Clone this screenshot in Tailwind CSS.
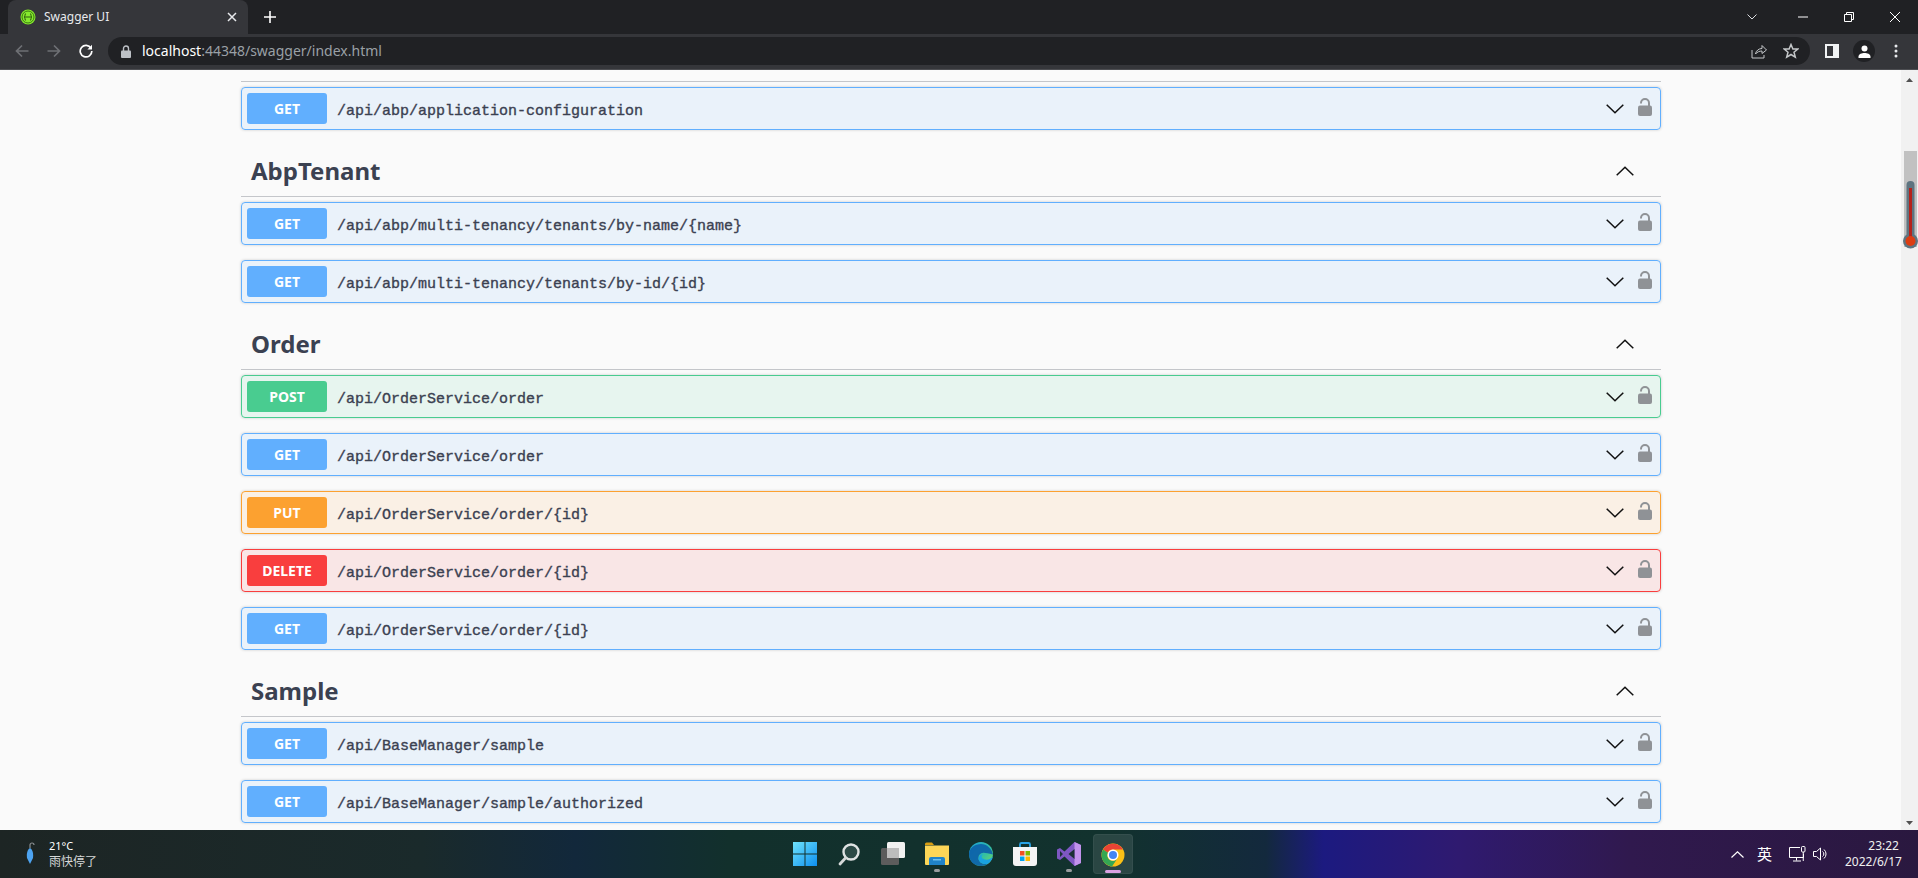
<!DOCTYPE html>
<html lang="zh-CN">
<head>
    <meta charset="UTF-8">
    <title>Swagger UI</title>
    <script src="https://cdn.jsdelivr.net/npm/@tailwindcss/browser@4"></script>
</head>
<body class="h-screen overflow-hidden flex flex-col bg-[#fafafa] font-['Noto_Sans','Noto_Sans_CJK_SC',sans-serif]">
    <svg class="hidden">
        <symbol id="down" viewBox="0 0 18 10"><path d="M0.7 0.7 9 8.8 17.3 0.7" fill="none" stroke="#111" stroke-width="1.5"/></symbol>
        <symbol id="up" viewBox="0 0 18 10"><path d="M0.7 9.3 9 1.2 17.3 9.3" fill="none" stroke="#111" stroke-width="1.5"/></symbol>
        <symbol id="lock" viewBox="0 0 14 18"><path d="M3 5.500V5a4 4 0 0 1 8 0v4" fill="none" stroke="#8f9296" stroke-width="2"/><rect x="0" y="7.500" width="14" height="10.500" rx="2" fill="#8f9296"/></symbol>
    </svg>

    <!-- Barra de abas -->
    <div class="h-[34px] shrink-0 bg-[#202124] flex items-end text-white">
        <div class="ml-2 w-[240px] h-[34px] bg-[#35363a] rounded-t-lg flex items-center pl-3 pr-[11px]">
            <svg class="w-4 h-4 shrink-0" viewBox="0 0 16 16"><circle cx="8" cy="8" r="7.500" fill="#85ea2d"/><circle cx="8" cy="8" r="6" fill="none" stroke="#3b7a12" stroke-width="1"/><path d="M6 4.500C4.500 4.500 5.500 8 4 8c1.500 0 .5 3.500 2 3.500M10 4.500c1.500 0 .5 3.500 2 3.500-1.500 0-.5 3.500-2 3.500M4.500 8h7" fill="none" stroke="#2c5a0d" stroke-width="1"/></svg>
            <span class="ml-2 text-xs text-[#e8eaed]">Swagger UI</span>
            <svg class="ml-auto w-[10px] h-[10px]" viewBox="0 0 10 10"><path d="M1 1l8 8M9 1l-8 8" stroke="#e8eaed" stroke-width="1.500"/></svg>
        </div>
        <svg class="ml-4 mb-[11px] w-3 h-3" viewBox="0 0 12 12"><path d="M6 0v12M0 6h12" stroke="#fff" stroke-width="1.600"/></svg>
        <div class="ml-auto flex items-center h-full">
            <svg class="w-[10px] h-[6px] mr-[41px]" viewBox="0 0 10 6"><path d="M0.500 0.500 5 5 9.500 0.500" fill="none" stroke="#dadce0" stroke-width="1"/></svg>
            <svg class="w-[10px] h-[10px] mr-9" viewBox="0 0 10 10"><path d="M0 5h10" stroke="#fff"/></svg>
            <svg class="w-[10px] h-[10px] mr-9" viewBox="0 0 10 10"><path d="M0.500 2.500h7v7h-7zM2.500 2.500v-2h7v7h-2" fill="none" stroke="#fff"/></svg>
            <svg class="w-[10px] h-[10px] mr-[18px]" viewBox="0 0 10 10"><path d="M0 0l10 10M10 0L0 10" stroke="#fff"/></svg>
        </div>
    </div>

    <!-- Barra de endereço -->
    <div class="h-9 shrink-0 bg-[#35363a] border-b border-[#4d4e52] flex items-center pb-px">
        <svg class="ml-[15px] w-[14px] h-[14px]" viewBox="0 0 14 14"><path d="M13.500 7H1.500M7 1.500 1.500 7 7 12.500" fill="none" stroke="#6e7074" stroke-width="1.700"/></svg>
        <svg class="ml-[18px] w-[14px] h-[14px]" viewBox="0 0 14 14"><path d="M0.500 7H12.500M7 1.500 12.500 7 7 12.500" fill="none" stroke="#6e7074" stroke-width="1.700"/></svg>
        <svg class="ml-[18px] w-[14px] h-[14px]" viewBox="0 0 14 14"><path d="M12 4.200A5.800 5.800 0 1 0 12.800 7" fill="none" stroke="#fff" stroke-width="1.700"/><path d="M13 0.800v4.600H8.400z" fill="#fff"/></svg>
        <div class="ml-[15px] w-[1702px] h-7 rounded-full bg-[#202124] flex items-center pl-[13px]">
            <svg class="w-[10px] h-[13px]" viewBox="0 0 10 13"><path d="M2.500 6V3.500a2.500 2.500 0 0 1 5 0V6" fill="none" stroke="#bdc1c6" stroke-width="1.400"/><rect y="5.500" width="10" height="7.500" rx="1" fill="#bdc1c6"/></svg>
            <span class="ml-[11px] text-sm text-white">localhost<span class="text-[#9aa0a6]">:44348/swagger/index.html</span></span>
            <svg class="ml-auto w-[16px] h-[16px]" viewBox="0 0 16 16"><path d="M1 7v8h12v-3M4.500 11C5 7.500 8 5.500 11 5.500V2.500l4.500 4.500L11 10.500V8C8.500 8 6 9 4.500 11z" fill="none" stroke="#c4c7c9" stroke-width="1"/></svg>
            <svg class="ml-4 mr-[11px] w-[16px] h-[16px]" viewBox="0 0 16 16"><path d="M8 1.500 9.900 6h4.900l-3.800 3.200 1.300 4.900L8 11.500l-4.300 2.600L5 9.200 1.200 6h4.900z" fill="none" stroke="#c4c7c9" stroke-width="1.500"/></svg>
        </div>
        <svg class="ml-[15px] w-[14px] h-[14px]" viewBox="0 0 14 14"><path d="M0 0h14v14H0z" fill="#f1f3f4"/><path d="M2 2h6v10H2z" fill="#35363a"/></svg>
        <div class="ml-[14px] w-[22px] h-[22px] rounded-full bg-[#202124] flex items-center justify-center">
            <svg class="w-[13px] h-[13px]" viewBox="0 0 13 13"><circle cx="6.500" cy="3.500" r="3" fill="#fff"/><path d="M0.500 13v-1.500C0.500 9 4 8 6.500 8s6 1 6 3.500V13z" fill="#fff"/></svg>
        </div>
        <svg class="ml-[19px] w-[4px] h-[14px]" viewBox="0 0 4 14"><circle cx="2" cy="2" r="1.500" fill="#e8eaed"/><circle cx="2" cy="7" r="1.500" fill="#e8eaed"/><circle cx="2" cy="12" r="1.500" fill="#e8eaed"/></svg>
    </div>

    <!-- Página -->
    <div class="flex-1 min-h-0 flex relative">
        <main class="flex-1 min-w-0 overflow-hidden pl-[241px]">
            <div class="w-[1420px] text-[#3b4151]">
                <div class="h-3 border-b border-[#c4c6ca] mb-[5px]"></div>
                <div class="h-[43px] mb-[15px] flex items-center pl-[5px] pr-[8px] border border-[#61affe] rounded bg-[#61affe]/10 shadow-[0_0_3px_rgba(0,0,0,0.19)]">
                    <span class="w-20 h-[31px] rounded-[3px] bg-[#61affe] text-white text-sm font-bold flex items-center justify-center">GET</span>
                    <span class="ml-[10px] mt-[7px] font-['Liberation_Mono',monospace] text-[15px] [-webkit-text-stroke:0.35px_#3b4151]">/api/abp/application-configuration</span>
                    <svg class="ml-auto w-[18px] h-[10px]"><use href="#down"/></svg><svg class="ml-[14px] w-[14px] h-[18px] mb-1"><use href="#lock"/></svg>
                </div>

                <div class="h-[52px] mb-[5px] pl-[10px] pr-[27px] border-b border-[#c4c6ca] flex items-center justify-between">
                    <h2 class="text-2xl font-bold">AbpTenant</h2>
                    <svg class="w-[18px] h-[10px]"><use href="#up"/></svg>
                </div>
                <div class="h-[43px] mb-[15px] flex items-center pl-[5px] pr-[8px] border border-[#61affe] rounded bg-[#61affe]/10 shadow-[0_0_3px_rgba(0,0,0,0.19)]">
                    <span class="w-20 h-[31px] rounded-[3px] bg-[#61affe] text-white text-sm font-bold flex items-center justify-center">GET</span>
                    <span class="ml-[10px] mt-[7px] font-['Liberation_Mono',monospace] text-[15px] [-webkit-text-stroke:0.35px_#3b4151]">/api/abp/multi-tenancy/tenants/by-name/{name}</span>
                    <svg class="ml-auto w-[18px] h-[10px]"><use href="#down"/></svg><svg class="ml-[14px] w-[14px] h-[18px] mb-1"><use href="#lock"/></svg>
                </div>
                <div class="h-[43px] mb-[15px] flex items-center pl-[5px] pr-[8px] border border-[#61affe] rounded bg-[#61affe]/10 shadow-[0_0_3px_rgba(0,0,0,0.19)]">
                    <span class="w-20 h-[31px] rounded-[3px] bg-[#61affe] text-white text-sm font-bold flex items-center justify-center">GET</span>
                    <span class="ml-[10px] mt-[7px] font-['Liberation_Mono',monospace] text-[15px] [-webkit-text-stroke:0.35px_#3b4151]">/api/abp/multi-tenancy/tenants/by-id/{id}</span>
                    <svg class="ml-auto w-[18px] h-[10px]"><use href="#down"/></svg><svg class="ml-[14px] w-[14px] h-[18px] mb-1"><use href="#lock"/></svg>
                </div>

                <div class="h-[52px] mb-[5px] pl-[10px] pr-[27px] border-b border-[#c4c6ca] flex items-center justify-between">
                    <h2 class="text-2xl font-bold">Order</h2>
                    <svg class="w-[18px] h-[10px]"><use href="#up"/></svg>
                </div>
                <div class="h-[43px] mb-[15px] flex items-center pl-[5px] pr-[8px] border border-[#49cc90] rounded bg-[#49cc90]/10 shadow-[0_0_3px_rgba(0,0,0,0.19)]">
                    <span class="w-20 h-[31px] rounded-[3px] bg-[#49cc90] text-white text-sm font-bold flex items-center justify-center">POST</span>
                    <span class="ml-[10px] mt-[7px] font-['Liberation_Mono',monospace] text-[15px] [-webkit-text-stroke:0.35px_#3b4151]">/api/OrderService/order</span>
                    <svg class="ml-auto w-[18px] h-[10px]"><use href="#down"/></svg><svg class="ml-[14px] w-[14px] h-[18px] mb-1"><use href="#lock"/></svg>
                </div>
                <div class="h-[43px] mb-[15px] flex items-center pl-[5px] pr-[8px] border border-[#61affe] rounded bg-[#61affe]/10 shadow-[0_0_3px_rgba(0,0,0,0.19)]">
                    <span class="w-20 h-[31px] rounded-[3px] bg-[#61affe] text-white text-sm font-bold flex items-center justify-center">GET</span>
                    <span class="ml-[10px] mt-[7px] font-['Liberation_Mono',monospace] text-[15px] [-webkit-text-stroke:0.35px_#3b4151]">/api/OrderService/order</span>
                    <svg class="ml-auto w-[18px] h-[10px]"><use href="#down"/></svg><svg class="ml-[14px] w-[14px] h-[18px] mb-1"><use href="#lock"/></svg>
                </div>
                <div class="h-[43px] mb-[15px] flex items-center pl-[5px] pr-[8px] border border-[#fca130] rounded bg-[#fca130]/10 shadow-[0_0_3px_rgba(0,0,0,0.19)]">
                    <span class="w-20 h-[31px] rounded-[3px] bg-[#fca130] text-white text-sm font-bold flex items-center justify-center">PUT</span>
                    <span class="ml-[10px] mt-[7px] font-['Liberation_Mono',monospace] text-[15px] [-webkit-text-stroke:0.35px_#3b4151]">/api/OrderService/order/{id}</span>
                    <svg class="ml-auto w-[18px] h-[10px]"><use href="#down"/></svg><svg class="ml-[14px] w-[14px] h-[18px] mb-1"><use href="#lock"/></svg>
                </div>
                <div class="h-[43px] mb-[15px] flex items-center pl-[5px] pr-[8px] border border-[#f93e3e] rounded bg-[#f93e3e]/10 shadow-[0_0_3px_rgba(0,0,0,0.19)]">
                    <span class="w-20 h-[31px] rounded-[3px] bg-[#f93e3e] text-white text-sm font-bold flex items-center justify-center">DELETE</span>
                    <span class="ml-[10px] mt-[7px] font-['Liberation_Mono',monospace] text-[15px] [-webkit-text-stroke:0.35px_#3b4151]">/api/OrderService/order/{id}</span>
                    <svg class="ml-auto w-[18px] h-[10px]"><use href="#down"/></svg><svg class="ml-[14px] w-[14px] h-[18px] mb-1"><use href="#lock"/></svg>
                </div>
                <div class="h-[43px] mb-[15px] flex items-center pl-[5px] pr-[8px] border border-[#61affe] rounded bg-[#61affe]/10 shadow-[0_0_3px_rgba(0,0,0,0.19)]">
                    <span class="w-20 h-[31px] rounded-[3px] bg-[#61affe] text-white text-sm font-bold flex items-center justify-center">GET</span>
                    <span class="ml-[10px] mt-[7px] font-['Liberation_Mono',monospace] text-[15px] [-webkit-text-stroke:0.35px_#3b4151]">/api/OrderService/order/{id}</span>
                    <svg class="ml-auto w-[18px] h-[10px]"><use href="#down"/></svg><svg class="ml-[14px] w-[14px] h-[18px] mb-1"><use href="#lock"/></svg>
                </div>

                <div class="h-[52px] mb-[5px] pl-[10px] pr-[27px] border-b border-[#c4c6ca] flex items-center justify-between">
                    <h2 class="text-2xl font-bold">Sample</h2>
                    <svg class="w-[18px] h-[10px]"><use href="#up"/></svg>
                </div>
                <div class="h-[43px] mb-[15px] flex items-center pl-[5px] pr-[8px] border border-[#61affe] rounded bg-[#61affe]/10 shadow-[0_0_3px_rgba(0,0,0,0.19)]">
                    <span class="w-20 h-[31px] rounded-[3px] bg-[#61affe] text-white text-sm font-bold flex items-center justify-center">GET</span>
                    <span class="ml-[10px] mt-[7px] font-['Liberation_Mono',monospace] text-[15px] [-webkit-text-stroke:0.35px_#3b4151]">/api/BaseManager/sample</span>
                    <svg class="ml-auto w-[18px] h-[10px]"><use href="#down"/></svg><svg class="ml-[14px] w-[14px] h-[18px] mb-1"><use href="#lock"/></svg>
                </div>
                <div class="h-[43px] mb-[15px] flex items-center pl-[5px] pr-[8px] border border-[#61affe] rounded bg-[#61affe]/10 shadow-[0_0_3px_rgba(0,0,0,0.19)]">
                    <span class="w-20 h-[31px] rounded-[3px] bg-[#61affe] text-white text-sm font-bold flex items-center justify-center">GET</span>
                    <span class="ml-[10px] mt-[7px] font-['Liberation_Mono',monospace] text-[15px] [-webkit-text-stroke:0.35px_#3b4151]">/api/BaseManager/sample/authorized</span>
                    <svg class="ml-auto w-[18px] h-[10px]"><use href="#down"/></svg><svg class="ml-[14px] w-[14px] h-[18px] mb-1"><use href="#lock"/></svg>
                </div>
            </div>
        </main>

        <!-- Barra de rolagem -->
        <aside class="w-[17px] shrink-0 bg-[#f1f1f1] flex flex-col items-center">
            <svg class="mt-2 w-[7px] h-1 shrink-0" viewBox="0 0 7 4"><path d="M3.500 0 7 4H0z" fill="#505050"/></svg>
            <div class="mt-[69px] ml-px w-[13px] h-[96px] bg-[#c1c1c1]"></div>
            <svg class="mt-auto mb-[5px] w-[7px] h-1 shrink-0" viewBox="0 0 7 4"><path d="M0 0h7L3.500 4z" fill="#505050"/></svg>
        </aside>

        <!-- Termômetro sobre a barra -->
        <svg class="absolute right-0 top-[110px] w-[15px] h-[70px]" viewBox="0 0 15 70">
            <rect x="3.500" y="1" width="8" height="60" rx="4" fill="#5e7480"/>
            <circle cx="7.500" cy="61" r="7.500" fill="#5e7480"/>
            <rect x="6" y="8" width="3" height="50" fill="#b5231c"/>
            <circle cx="7.500" cy="61" r="5" fill="#dc3d12"/>
        </svg>
    </div>

    <!-- Barra de tarefas -->
    <footer class="h-12 shrink-0 grid grid-cols-[1fr_auto_1fr] items-center text-white bg-[linear-gradient(90deg,#1d2524_0%,#1a2a2b_22%,#12283b_30%,#12302c_38%,#12322e_58%,#13293d_66%,#1c1a80_69%,#2f1a70_76%,#30194e_85%,#2a183f_100%)]">
        <div class="flex items-center pl-[25px]">
            <svg class="w-[10px] h-[24px]" viewBox="0 0 10 24"><path d="M5 6C2 8 1.500 12 2 16l3 6 3-6c.5-4 0-8-3-10z" fill="#4da3f0"/><path d="M5 6V3a2 2 0 0 1 4 0" fill="none" stroke="#8a8f92" stroke-width="1.200"/></svg>
            <div class="ml-[14px] text-xs leading-4">
                <div class="text-[11px] text-white">21°C</div>
                <div class="text-[#d5d8d8]">雨快停了</div>
            </div>
        </div>

        <div class="flex items-center h-full">
            <div class="w-11 h-full flex items-center justify-center">
                <svg class="w-6 h-6" viewBox="0 0 24 24"><defs><linearGradient id="win" x1="0" y1="0" x2="1" y2="1"><stop offset="0" stop-color="#6fe3fb"/><stop offset="1" stop-color="#0d8ff0"/></linearGradient></defs><path d="M0 0h11.500v11.500H0zM12.500 0H24v11.500H12.500zM0 12.500h11.500V24H0zM12.500 12.500H24V24H12.500z" fill="url(#win)"/></svg>
            </div>
            <div class="w-11 h-full flex items-center justify-center">
                <svg class="w-[22px] h-[24px]" viewBox="0 0 22 24"><circle cx="13" cy="10" r="7.500" fill="#2c4a46" stroke="#dfe3e3" stroke-width="2.400"/><path d="M7.500 16 2 22" stroke="#d5d8d8" stroke-width="2.800" stroke-linecap="round"/></svg>
            </div>
            <div class="w-11 h-full flex items-center justify-center">
                <svg class="w-6 h-6" viewBox="0 0 24 24"><rect x="6" y="0" width="18" height="16" rx="1.500" fill="#f2f2f2"/><rect x="0" y="6" width="18" height="17" rx="1.500" fill="#5c5c5c"/><rect x="6" y="6" width="12" height="10" fill="#bdbdbd"/></svg>
            </div>
            <div class="w-11 h-full flex flex-col items-center justify-center relative">
                <svg class="w-6 h-6" viewBox="0 0 24 24"><path d="M0 2a1.500 1.500 0 0 1 1.500-1.500H7l2 2.500h-9z" fill="#d99e12"/><path d="M0 3.500h24V22a1 1 0 0 1-1 1H1a1 1 0 0 1-1-1z" fill="#fcd657"/><path d="M4 17a2 2 0 0 1 2-2h12a2 2 0 0 1 2 2v6H4z" fill="#1f83c8"/><rect x="8" y="17" width="8" height="1.500" fill="#6cc0ee"/></svg>
                <span class="absolute bottom-[6px] w-[6px] h-[3px] rounded-full bg-[#9a9ea0]"></span>
            </div>
            <div class="w-11 h-full flex items-center justify-center">
                <svg class="w-6 h-6" viewBox="0 0 24 24"><defs><linearGradient id="edgeA" x1="0" y1="0" x2="1" y2="1"><stop offset="0" stop-color="#1a9fd8"/><stop offset="0.600" stop-color="#35c1a0"/><stop offset="1" stop-color="#7bdc5a"/></linearGradient></defs><circle cx="12" cy="12" r="12" fill="url(#edgeA)"/><path d="M0 12C0 19 5 24 12 24c3 0 5-1 6.500-2-3 .5-7-.5-8.500-3.500-1.500-3 0-7 3.500-7.500 2.500-.5 5 .5 10.500 1.500C23 7 18 2 12 2 6 2 0 6 0 12z" fill="#0c5fa8" opacity="0.900"/><path d="M10 18.500C11.500 21.500 15.500 22.500 18.500 22 21 20.500 23 18 24 14.500 22 17 19 18 16 17.500c-2-.3-3.500-1.500-3.500-3 0-1 .7-1.800 1.800-2.500-3 .2-5.500 3.500-4.300 6.500z" fill="#19a2e0"/></svg>
            </div>
            <div class="w-11 h-full flex items-center justify-center">
                <svg class="w-6 h-6" viewBox="0 0 24 24"><path d="M7 6V2.500a1.500 1.500 0 0 1 1.500-1.500h7A1.500 1.500 0 0 1 17 2.500V6" fill="none" stroke="#2aa3e6" stroke-width="1.800"/><path d="M0 5h24v16a3 3 0 0 1-3 3H3a3 3 0 0 1-3-3z" fill="#f4f4f4"/><rect x="7" y="9" width="4.500" height="4.500" fill="#f25022"/><rect x="12.500" y="9" width="4.500" height="4.500" fill="#7fba00"/><rect x="7" y="14.500" width="4.500" height="4.500" fill="#00a4ef"/><rect x="12.500" y="14.500" width="4.500" height="4.500" fill="#ffb900"/></svg>
            </div>
            <div class="w-11 h-full flex items-center justify-center relative">
                <svg class="w-6 h-6" viewBox="0 0 24 24"><path d="M17.500 0 24 3v18l-6.500 3L7.500 14.500 3 18l-3-1.500v-9L3 6l4.500 3.500z" fill="#7e57c2"/><path d="M17.500 0 24 3v18l-6.500 3z" fill="#c292ec"/><path d="M17.500 7 11.500 12l6 5zM3 9v6l3-3z" fill="#1a2f35"/></svg>
                <span class="absolute bottom-[6px] w-[6px] h-[3px] rounded-full bg-[#9a9ea0]"></span>
            </div>
            <div class="w-11 h-full flex items-center justify-center">
                <div class="w-10 h-10 rounded bg-white/10 border border-white/5 flex flex-col items-center relative">
                    <svg class="mt-[8px] w-6 h-6" viewBox="0 0 24 24"><circle cx="12" cy="12" r="11.500" fill="#fbc116"/><path d="M2 6.500A11.500 11.500 0 0 1 22 6.500H12a5.500 5.500 0 0 0-5 3.200z" fill="#ea4335"/><path d="M2 6.500 7 9.700A5.500 5.500 0 0 0 16.700 15L11 23.500A11.500 11.500 0 0 1 2 6.500z" fill="#34a853"/><circle cx="12" cy="12" r="5.500" fill="#fff"/><circle cx="12" cy="12" r="4" fill="#4285f4"/></svg>
                    <span class="absolute bottom-0 w-4 h-[3px] rounded-full bg-[#dba2e3]"></span>
                </div>
            </div>
        </div>

        <div class="flex items-center justify-end pr-[19px]">
            <svg class="w-[13px] h-[7px]" viewBox="0 0 13 7"><path d="M0.500 6.500 6.500 0.800l6 5.700" fill="none" stroke="#fff" stroke-width="1.200"/></svg>
            <span class="ml-[13px] text-[15px] font-['Noto_Sans_CJK_SC',sans-serif]">英</span>
            <svg class="ml-[17px] w-[17px] h-[16px]" viewBox="0 0 17 16"><path d="M11 1.500H0.500v10h14V8M7.500 11.500v3M4 15h8" fill="none" stroke="#fff" stroke-width="1"/><rect x="12.500" y="0.500" width="3.500" height="5.500" rx="1" fill="none" stroke="#fff"/><path d="M14.250 6v9" stroke="#fff"/></svg>
            <svg class="ml-[7px] w-[16px] h-[14px]" viewBox="0 0 16 14"><path d="M0.500 4.500h3L7.500 1v12l-4-3.500h-3z" fill="none" stroke="#fff"/><path d="M9.500 4.500a3 3 0 0 1 0 5M11 2.500a6 6 0 0 1 0 9" fill="none" stroke="#fff"/></svg>
            <div class="ml-4 text-right text-xs leading-4 text-[#f0f0f0] w-[54px]">
                <div>23:22</div>
                <div class="whitespace-nowrap">2022/6/17</div>
            </div>
        </div>
    </footer>
</body>
</html>
